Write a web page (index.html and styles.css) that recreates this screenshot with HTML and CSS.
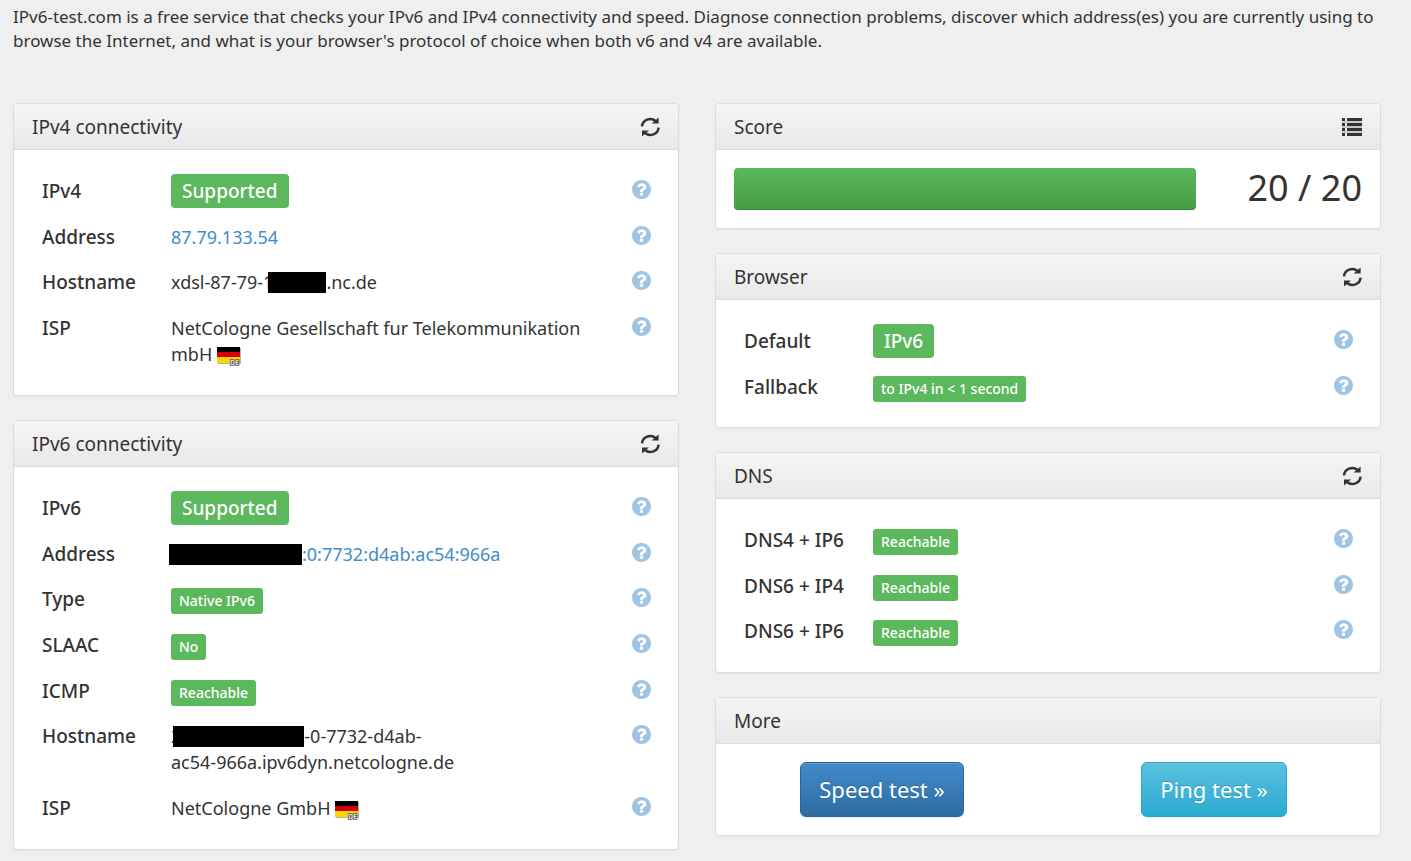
FILE: index.html
```html
<!DOCTYPE html>
<html lang="en">
<head>
    <meta charset="UTF-8">
    <meta name="viewport" content="width=device-width, initial-scale=1.0">
    <title>IPv6 test - IPv6/4 connectivity and speed test</title>
    <link rel="stylesheet" href="styles.css">
</head>
<body>

<!-- Shared icons -->
<svg class="sprite" aria-hidden="true">
    <symbol id="icon-refresh" viewBox="0 0 20 20">
        <path d="M2 9.4A8.2 8 0 0 1 15.6 4" fill="none" stroke="currentColor" stroke-width="2.5"/>
        <path d="M18.6 10.6A8.2 8 0 0 1 5 16" fill="none" stroke="currentColor" stroke-width="2.5"/>
        <path d="M18.6.4v6.2h-7z" fill="currentColor"/>
        <path d="M2 19.6v-6.2h7z" fill="currentColor"/>
    </symbol>
    <symbol id="icon-list" viewBox="0 0 20 20">
        <path d="M0 1h3v3H0zM5 1h15v3H5zM0 6h3v3H0zM5 6h15v3H5zM0 11h3v3H0zM5 11h15v3H5zM0 16h3v3H0zM5 16h15v3H5z" fill="currentColor"/>
        <path d="M0 4h20v2H0zM0 9h20v2H0zM0 14h20v2H0z" fill="currentColor" opacity=".2"/>
    </symbol>
    <symbol id="icon-help" viewBox="128 128 1536 1536">
        <path fill="currentColor" d="M1024 1376v-192q0-14-9-23t-23-9h-192q-14 0-23 9t-9 23v192q0 14 9 23t23 9h192q14 0 23-9t9-23zm256-672q0-88-55.5-163t-138.5-116-170-41q-243 0-371 213-15 24 8 42l132 100q7 6 19 6 16 0 25-12 53-68 86-92 34-24 86-24 48 0 85.5 26t37.500 59q0 38-20 61t-68 45q-63 28-115.5 86.5t-52.5 125.5v36q0 14 9 23t23 9h192q14 0 23-9t9-23q0-19 21.5-49.500t54.5-49.500q32-18 49-28.5t46-35 44.5-48 28-60.5 12.5-81zm384 192q0 209-103 385.5t-279.5 279.5-385.5 103-385.5-103-279.5-279.5-103-385.5 103-385.5 279.5-279.5 385.5-103 385.5 103 279.5 279.5 103 385.5z"/>
    </symbol>
    <symbol id="flag-de" viewBox="0 0 26 20">
        <path d="M1 1h23v16H1z" fill="#000" opacity=".3"/>
        <path d="M0 0h23v5H0z" fill="#000"/>
        <path d="M0 5h23v5H0z" fill="#d60000"/>
        <path d="M0 10h23v6H0z" fill="#ffd500"/>
        <text x="13" y="18" font-size="7" font-weight="700" fill="#ddd" stroke="#555" stroke-width="1.5" paint-order="stroke">DE</text>
    </symbol>
</svg>

<p class="intro">IPv6-test.com is a free service that checks your IPv6 and IPv4 connectivity and speed. Diagnose connection problems, discover which address(es) you are currently using to browse the Internet, and what is your browser's protocol of choice when both v6 and v4 are available.</p>

<div class="columns">
    <div class="column">
        <section class="panel">
            <div class="panel-heading">
                <h2>IPv4 connectivity</h2>
                <button class="tool" aria-label="Refresh"><svg><use href="#icon-refresh"/></svg></button>
            </div>
            <div class="panel-body">
                <table>
                    <tr>
                        <th>IPv4</th>
                        <td><span class="label label-lg">Supported</span></td>
                        <td class="help"><a href="#" aria-label="Help"><svg><use href="#icon-help"/></svg></a></td>
                    </tr>
                    <tr>
                        <th>Address</th>
                        <td><a href="#">87.79.133.54</a></td>
                        <td class="help"><a href="#" aria-label="Help"><svg><use href="#icon-help"/></svg></a></td>
                    </tr>
                    <tr>
                        <th>Hostname</th>
                        <td>xdsl-87-79-1<span class="mask mask-short"></span>.nc.de</td>
                        <td class="help"><a href="#" aria-label="Help"><svg><use href="#icon-help"/></svg></a></td>
                    </tr>
                    <tr>
                        <th>ISP</th>
                        <td>NetCologne Gesellschaft fur Telekommunikation mbH <svg class="flag"><use href="#flag-de"/></svg></td>
                        <td class="help"><a href="#" aria-label="Help"><svg><use href="#icon-help"/></svg></a></td>
                    </tr>
                </table>
            </div>
        </section>

        <section class="panel">
            <div class="panel-heading">
                <h2>IPv6 connectivity</h2>
                <button class="tool" aria-label="Refresh"><svg><use href="#icon-refresh"/></svg></button>
            </div>
            <div class="panel-body">
                <table>
                    <tr>
                        <th>IPv6</th>
                        <td><span class="label label-lg">Supported</span></td>
                        <td class="help"><a href="#" aria-label="Help"><svg><use href="#icon-help"/></svg></a></td>
                    </tr>
                    <tr>
                        <th>Address</th>
                        <td><a href="#"><span class="mask mask-address"></span>:0:7732:d4ab:ac54:966a</a></td>
                        <td class="help"><a href="#" aria-label="Help"><svg><use href="#icon-help"/></svg></a></td>
                    </tr>
                    <tr>
                        <th>Type</th>
                        <td><span class="label">Native IPv6</span></td>
                        <td class="help"><a href="#" aria-label="Help"><svg><use href="#icon-help"/></svg></a></td>
                    </tr>
                    <tr>
                        <th>SLAAC</th>
                        <td><span class="label">No</span></td>
                        <td class="help"><a href="#" aria-label="Help"><svg><use href="#icon-help"/></svg></a></td>
                    </tr>
                    <tr>
                        <th>ICMP</th>
                        <td><span class="label">Reachable</span></td>
                        <td class="help"><a href="#" aria-label="Help"><svg><use href="#icon-help"/></svg></a></td>
                    </tr>
                    <tr>
                        <th>Hostname</th>
                        <td>2<span class="mask mask-host"></span>-0-7732-d4ab-<br>ac54-966a.ipv6dyn.netcologne.de</td>
                        <td class="help"><a href="#" aria-label="Help"><svg><use href="#icon-help"/></svg></a></td>
                    </tr>
                    <tr>
                        <th>ISP</th>
                        <td>NetCologne GmbH <svg class="flag"><use href="#flag-de"/></svg></td>
                        <td class="help"><a href="#" aria-label="Help"><svg><use href="#icon-help"/></svg></a></td>
                    </tr>
                </table>
            </div>
        </section>
    </div>

    <div class="column">
        <section class="panel">
            <div class="panel-heading">
                <h2>Score</h2>
                <button class="tool" aria-label="Details"><svg><use href="#icon-list"/></svg></button>
            </div>
            <div class="panel-body score">
                <div class="progress"><div class="progress-bar" style="width: 100%"></div></div>
                <div class="score-value">20 / 20</div>
            </div>
        </section>

        <section class="panel">
            <div class="panel-heading">
                <h2>Browser</h2>
                <button class="tool" aria-label="Refresh"><svg><use href="#icon-refresh"/></svg></button>
            </div>
            <div class="panel-body">
                <table>
                    <tr>
                        <th>Default</th>
                        <td><span class="label label-lg">IPv6</span></td>
                        <td class="help"><a href="#" aria-label="Help"><svg><use href="#icon-help"/></svg></a></td>
                    </tr>
                    <tr>
                        <th>Fallback</th>
                        <td><span class="label">to IPv4 in &lt; 1 second</span></td>
                        <td class="help"><a href="#" aria-label="Help"><svg><use href="#icon-help"/></svg></a></td>
                    </tr>
                </table>
            </div>
        </section>

        <section class="panel">
            <div class="panel-heading">
                <h2>DNS</h2>
                <button class="tool" aria-label="Refresh"><svg><use href="#icon-refresh"/></svg></button>
            </div>
            <div class="panel-body">
                <table>
                    <tr>
                        <th>DNS4 + IP6</th>
                        <td><span class="label">Reachable</span></td>
                        <td class="help"><a href="#" aria-label="Help"><svg><use href="#icon-help"/></svg></a></td>
                    </tr>
                    <tr>
                        <th>DNS6 + IP4</th>
                        <td><span class="label">Reachable</span></td>
                        <td class="help"><a href="#" aria-label="Help"><svg><use href="#icon-help"/></svg></a></td>
                    </tr>
                    <tr>
                        <th>DNS6 + IP6</th>
                        <td><span class="label">Reachable</span></td>
                        <td class="help"><a href="#" aria-label="Help"><svg><use href="#icon-help"/></svg></a></td>
                    </tr>
                </table>
            </div>
        </section>

        <section class="panel">
            <div class="panel-heading">
                <h2>More</h2>
            </div>
            <div class="panel-body more">
                <button class="btn btn-primary">Speed test »</button>
                <button class="btn btn-info">Ping test »</button>
            </div>
        </section>
    </div>
</div>

</body>
</html>
```
FILE: styles.css
```css
* {
    box-sizing: border-box;
}
body {
    margin: 0;
    padding: 5px 30px 12px 13px;
    background-color: #efefef;
    color: #333;
    font-family: "Noto Sans", sans-serif;
    font-size: 18px;
    line-height: 26px;
}
a {
    color: #428bca;
    text-decoration: none;
}
.sprite {
    display: none;
}
.intro {
    margin: 0 0 50px;
    font-size: 17px;
    line-height: 24px;
}
.columns {
    display: grid;
    grid-template-columns: 1fr 1fr;
    gap: 36px;
    align-items: start;
}
.column {
    display: flex;
    flex-direction: column;
    gap: 24px;
}

/* Panels */
.panel {
    background-color: #fff;
    border: 1px solid #ddd;
    border-radius: 4px;
    box-shadow: 0 1px 2px rgba(0, 0, 0, 0.05);
    overflow: hidden;
}
.panel-heading {
    display: flex;
    align-items: center;
    justify-content: space-between;
    height: 46px;
    padding: 0 18px;
    background: linear-gradient(#f5f5f5, #e8e8e8);
    border-bottom: 1px solid #ddd;
}
.panel-heading h2 {
    margin: 0;
    font-size: 19px;
    font-weight: 400;
}
.panel-body {
    padding: 18px;
}
.tool {
    padding: 0;
    border: none;
    background: none;
    color: #333;
    cursor: pointer;
}
.tool svg {
    display: block;
    width: 20px;
    height: 20px;
}

/* Result tables */
table {
    width: 100%;
    table-layout: fixed;
    border-collapse: collapse;
}
th, td {
    height: 46px;
    padding: 10px;
    text-align: left;
    vertical-align: top;
}
th {
    width: 129px;
    font-size: 19px;
    font-weight: 500;
}
tr:nth-child(3n+2) th,
tr:nth-child(3n+2) td {
    height: 45px;
    padding-bottom: 9px;
}
.help {
    width: 38px;
    padding-right: 9px;
}
.help svg {
    display: block;
    width: 19px;
    height: 19px;
    margin-top: 2px;
    opacity: 0.5;
}
.label {
    padding: 3px 8px 4px;
    border-radius: 3px;
    background-color: #5cb85c;
    color: #fff;
    font-size: 14px;
    font-weight: 500;
    line-height: 1;
    white-space: nowrap;
}
.label-lg {
    padding: 4px 11px;
    border-radius: 4px;
    font-size: 19px;
}
.flag {
    width: 26px;
    height: 20px;
    vertical-align: -6px;
}
.mask {
    display: inline-block;
    height: 21px;
    background-color: #000;
    vertical-align: -4px;
}
.mask-short {
    width: 58px;
    margin-left: -5px;
}
.mask-address {
    width: 133px;
    margin-left: -2px;
}
.mask-host {
    width: 131px;
    margin-left: -8px;
}

/* Score */
.score {
    display: grid;
    grid-template-columns: repeat(4, 1fr);
    gap: 36px;
}
.progress {
    grid-column: span 3;
    height: 42px;
    border-radius: 4px;
    overflow: hidden;
}
.progress-bar {
    height: 100%;
    background: linear-gradient(#5cb85c, #449d44);
    box-shadow: inset 0 -1px 0 rgba(0, 0, 0, 0.15);
}
.score-value {
    font-size: 36px;
    line-height: 40px;
    text-align: right;
    white-space: nowrap;
}

/* Buttons */
.more {
    display: grid;
    grid-template-columns: 1fr 1fr;
    justify-items: center;
    padding: 18px 0;
}
.btn {
    height: 55px;
    padding: 0 18px 2px;
    border: 1px solid;
    border-radius: 6px;
    color: #fff;
    font-family: inherit;
    font-size: 22px;
    text-shadow: 0 -1px 0 rgba(0, 0, 0, 0.2);
    box-shadow: inset 0 1px 0 rgba(255, 255, 255, 0.15), 0 1px 1px rgba(0, 0, 0, 0.08);
    cursor: pointer;
}
.btn-primary {
    background: linear-gradient(#428bca, #2d6ca2);
    border-color: #2b669a;
}
.btn-info {
    background: linear-gradient(#5bc0de, #2aabd2);
    border-color: #28a4c9;
}
```
